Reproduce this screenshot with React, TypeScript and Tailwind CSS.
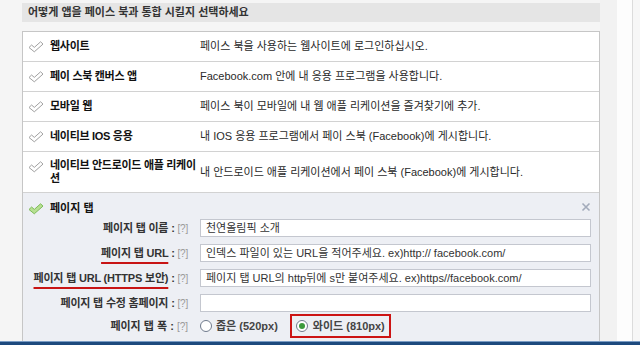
import React from "react";

const rows: { title: React.ReactNode; desc: string; tall?: boolean }[] = [
  { title: "웹사이트", desc: "페이스 북을 사용하는 웹사이트에 로그인하십시오." },
  { title: "페이 스북 캔버스 앱", desc: "Facebook.com 안에 내 응용 프로그램을 사용합니다." },
  { title: "모바일 웹", desc: "페이스 북이 모바일에 내 웹 애플 리케이션을 즐겨찾기에 추가." },
  { title: "네이티브 IOS 응용", desc: "내 IOS 응용 프로그램에서 페이 스북 (Facebook)에 게시합니다." },
  {
    title: (
      <>
        네이티브 안드로이드 애플 리케이
        <br />션
      </>
    ),
    desc: "내 안드로이드 애플 리케이션에서 페이 스북 (Facebook)에 게시합니다.",
    tall: true,
  },
];

function Check({ on }: { on?: boolean }) {
  return (
    <svg width="16" height="12" viewBox="0 0 16 12">
      <path
        d="M1 6.5 L3.6 4 L6.3 6.4 L12.6 0.8 L15 3.1 L6.3 10.8 Z"
        fill={on ? "#b7e092" : "#ffffff"}
        stroke={on ? "#7dbb58" : "#a0a0a0"}
        strokeWidth="1"
        strokeLinejoin="round"
      />
    </svg>
  );
}

function Radio({ on }: { on?: boolean }) {
  return (
    <span className="flex h-[12px] w-[12px] items-center justify-center rounded-full border border-[#6f7a8c] bg-white">
      {on && <span className="h-[6px] w-[6px] rounded-full bg-[#3c9a3c]" />}
    </span>
  );
}

function Field({ label, value, mark }: { label: string; value?: string; mark?: boolean }) {
  return (
    <div className="mb-[7px] flex h-[18px] items-center">
      <div className="w-[165px] shrink-0 whitespace-nowrap text-right font-bold tracking-[-0.2px] text-[#333]">
        <span className={mark ? "underline decoration-[#c81414] decoration-2 underline-offset-[5px]" : ""}>{label}</span>
        <span> : </span>
        <span className="font-normal text-[10px] text-[#999]">[?]</span>
      </div>
      <div className="ml-[12px] flex h-[18px] w-[391px] items-center border border-[#c4c7cf] bg-white pl-[5px] text-[#333]">
        {value}
      </div>
    </div>
  );
}

export default function App() {
  return (
    <div className="flex h-[345px] w-[640px] flex-col overflow-hidden bg-[#f5f5f5] font-['Liberation_Sans','Noto_Sans_CJK_KR',sans-serif] text-[11px] leading-[13px]">
      <div className="flex min-h-0 flex-1">
        <div className="w-[600px] shrink-0 overflow-hidden pl-[22px]">
          <div className="mt-[3px] flex h-[19px] items-center bg-[#e5e5e5] pl-[6px] font-bold text-[#333]">
            어떻게 앱을 페이스 북과 통합 시킬지 선택하세요
          </div>
          <div className="mt-[9px] border border-[#c6c6c6] bg-white">
            {rows.map((r, i) => (
              <div
                key={i}
                className={`flex items-center border-b border-[#d2d2d2] ${r.tall ? "h-[41px]" : "h-[30px]"}`}
              >
                <div className={`w-[27px] shrink-0 self-start pl-[5px] ${r.tall ? "pt-[9px]" : "pt-[9px]"}`}>
                  <Check />
                </div>
                <div className="w-[150px] shrink-0 whitespace-nowrap font-bold tracking-[-0.3px] text-[#111]">{r.title}</div>
                <div className="text-[#2a2a2a]">{r.desc}</div>
              </div>
            ))}
            <div className="relative bg-[#edeff4] pt-[8px]">
              <div className="flex h-[15px] items-center">
                <div className="w-[27px] shrink-0 pl-[5px]">
                  <Check on />
                </div>
                <div className="font-bold text-[#111]">페이지 탭</div>
              </div>
              <svg className="absolute right-[8px] top-[9px]" width="10" height="10" viewBox="0 0 10 10">
                <path d="M1.5 1.5 L8.5 8.5 M8.5 1.5 L1.5 8.5" stroke="#a3abbb" strokeWidth="1.6" />
              </svg>
              <div className="mt-[3px]">
                <Field label="페이지 탭 이름" value="천연올림픽 소개" />
                <Field label="페이지 탭 URL" value="인덱스 파일이 있는 URL을 적어주세요. ex)http:// facebook.com/" mark />
                <Field
                  label="페이지 탭 URL (HTTPS 보안)"
                  value="페이지 탭 URL의 http뒤에 s만 붙여주세요. ex)https//facebook.com/"
                  mark
                />
                <Field label="페이지 탭 수정 홈페이지" />
                <div className="-mt-[5px] flex h-[24px] items-center">
                  <div className="w-[165px] shrink-0 text-right font-bold text-[#333]">
                    페이지 탭 폭 : <span className="font-normal text-[10px] text-[#999]">[?]</span>
                  </div>
                  <div className="ml-[12px] flex items-center gap-[4px] font-bold text-[#444]">
                    <Radio />
                    <span>좁은 (520px)</span>
                  </div>
                  <div className="ml-[12px] flex h-[24px] items-center gap-[5px] border-2 border-[#cc1414] pl-[4px] pr-[4px] font-bold text-[#444]">
                    <Radio on />
                    <span>와이드 (810px)</span>
                  </div>
                </div>
                <div className="h-[20px]" />
              </div>
            </div>
          </div>
        </div>
        <div className="w-[17px] shrink-0 bg-[#f2f2f2]" />
        <div className="w-[16px] shrink-0 border-r border-[#dcdcdc] bg-[#fdfdfd]" />
        <div className="flex-1 bg-[#f7f7f7]" />
      </div>
      <div className="h-[1px] shrink-0 bg-[#7a9cc4]" />
      <div className="h-[3px] shrink-0 bg-[#1d4a7e]" />
    </div>
  );
}
